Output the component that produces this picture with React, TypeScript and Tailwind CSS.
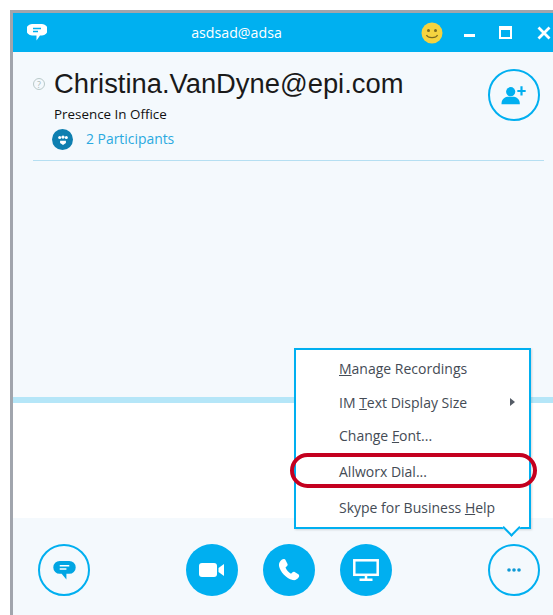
import React from 'react';

const menuFont = { fontFamily: '"Open Sans", "Noto Sans", sans-serif' };

const CircleButton: React.FC<{ filled?: boolean; children: React.ReactNode }> = ({ filled, children }) => (
  <div
    className={`flex h-[52px] w-[52px] shrink-0 items-center justify-center rounded-full ${
      filled ? 'bg-[#00aff0]' : 'border-[2px] border-[#00aff0] bg-[#f4f9fd]'
    }`}
  >
    {children}
  </div>
);

const MenuItem: React.FC<{ children: React.ReactNode; arrow?: boolean }> = ({ children, arrow }) => (
  <div className="flex h-[33.5px] items-center justify-between pl-[43px] pr-[14px] text-[14px] text-[#444b55]">
    <span>{children}</span>
    {arrow && <span className="h-0 w-0 border-y-[4px] border-l-[5px] border-y-transparent border-l-[#555c66]" />}
  </div>
);

export default function App() {
  return (
    <div className="h-[615px] w-[553px] overflow-hidden bg-white pl-[10px] pt-[10px]">
      <div className="relative flex h-[605px] w-[560px] flex-col border-l-[3px] border-t-[3px] border-[#a1a5ad]">
        {/* title bar */}
        <div className="flex h-[39px] shrink-0 items-center bg-[#00b0f0] text-white">
          <svg className="ml-[14px] h-[19px] w-[20px]" viewBox="0 0 20 19">
            <path d="M5 1h10a4.500 4.500 0 0 1 0 11.500h-2l-3.500 5v-5H5A4.500 4.500 0 0 1 5 1z" fill="#fff" />
            <path d="M6 5.500h8M6 8.500h5" stroke="#00b0f0" strokeWidth="1.500" />
          </svg>
          <span className="ml-[137px] w-[105px] text-center text-[14.200px]" style={menuFont}>asdsad@adsa</span>
          <div className="ml-[132px] flex h-[22px] w-[22px] items-center justify-center">
            <svg viewBox="0 0 22 22" className="h-[22px] w-[22px]">
              <circle cx="11" cy="11" r="10.500" fill="#f5d33f" />
              <circle cx="7.500" cy="8.500" r="1.500" fill="#7a6a20" />
              <circle cx="14.500" cy="8.500" r="1.500" fill="#7a6a20" />
              <path d="M5.500 13c1.500 3.500 9.500 3.500 11 0" fill="none" stroke="#7a6a20" strokeWidth="1.300" />
            </svg>
          </div>
          <div className="ml-[21px] mt-[6px] h-[3px] w-[11px] bg-white" />
          <div className="ml-[24px] h-[13px] w-[13px] border-[2px] border-t-[4px] border-white" />
          <svg className="ml-[25px] h-[14px] w-[14px]" viewBox="0 0 14 14">
            <path d="M1.500 1.500l11 11M12.500 1.500l-11 11" stroke="#fff" strokeWidth="2.800" />
          </svg>
        </div>

        {/* conversation header */}
        <div className="h-[345px] shrink-0 bg-[#f4f9fd] pl-[20px]">
          <div className="flex w-[511px] flex-col border-b border-[#b5dff2] pb-[10px]">
            <div className="flex items-start justify-between">
              <div className="flex items-center pt-[16px]">
                <span className="flex h-[12px] w-[12px] items-center justify-center rounded-full border border-[#b9c9c9] text-[9px] leading-none text-[#a9b9b9]" style={menuFont}>?</span>
                <span className="ml-[9px] text-[27.350px] leading-[32px] text-[#1a1a1a]" style={{ fontFamily: '"Liberation Sans", sans-serif' }}>
                  Christina.VanDyne@epi.com
                </span>
              </div>
              <div className="mr-[4px] mt-[17px]">
                <CircleButton>
                  <svg viewBox="0 0 30 24" className="h-[20px] w-[26px]" fill="#00aff0">
                    <circle cx="11" cy="8" r="5.500" />
                    <path d="M0 23c0-6 3-8 7-9h8c4 1 7 3 7 9z" />
                    <path d="M19 6h10v2.500H19zM22.700 1.500h2.600v11h-2.600z" />
                  </svg>
                </CircleButton>
              </div>
            </div>
            <div className="-mt-[16px] pl-[21px] text-[13.400px] leading-[18px] text-[#111111]" style={menuFont}>Presence In Office</div>
            <div className="mt-[6px] flex items-center pl-[19px]">
              <span className="flex h-[21px] w-[21px] items-center justify-center rounded-full bg-[#0e7fb0]">
                <svg viewBox="0 0 14 12" className="h-[10px] w-[12px]" fill="#fff">
                  <circle cx="3" cy="3" r="1.800" />
                  <circle cx="7" cy="2.500" r="2" />
                  <circle cx="11" cy="3" r="1.800" />
                  <path d="M3.500 7h7v2.500L7 12 3.500 9.500z" />
                </svg>
              </span>
              <span className="ml-[13px] text-[13.900px] text-[#2aa9e0]" style={menuFont}>2 Participants</span>
            </div>
          </div>
        </div>

        {/* compose area */}
        <div className="h-[6px] shrink-0 bg-[#b5e6f8]" />
        <div className="h-[115px] shrink-0 bg-white" />

        {/* call controls */}
        <div className="flex flex-1 items-start bg-[#f4f9fd] pl-[25px] pt-[26px]">
          <CircleButton>
            <svg viewBox="0 0 24 22" className="h-[21px] w-[23px]">
              <path d="M7 1h10a6 6 0 0 1 0 13.500h-3v6l-5-6H7A6 6 0 0 1 7 1z" fill="#00a5e3" />
              <path d="M7 6h10M7 9.500h7" stroke="#fff" strokeWidth="1.500" />
            </svg>
          </CircleButton>
          <div className="ml-[96px] flex gap-[25px]">
            <CircleButton filled>
              <svg viewBox="0 0 26 16" className="h-[16px] w-[26px]" fill="#fff">
                <rect x="0" y="1" width="18" height="14" rx="3" />
                <path d="M19.500 6l5.500-4v12l-5.500-4z" />
              </svg>
            </CircleButton>
            <CircleButton filled>
              <svg viewBox="0 0 24 24" className="h-[24px] w-[24px]" fill="#fff">
                <path d="M5 1.500c1.500-1 3-.5 3.500.5l2 4c.4.900 0 1.800-.7 2.300L8.500 9.500c.8 2.500 3 5 5.500 6.200l1.300-1.300c.7-.7 1.600-.9 2.400-.4l3.600 2.300c1 .6 1.200 2 .4 3-1.500 2.200-3.500 3.200-6 2.700C9 20.500 3 13.500 2 8c-.4-2.800 1-5 3-6.500z" />
              </svg>
            </CircleButton>
            <CircleButton filled>
              <svg viewBox="0 0 26 22" className="h-[22px] w-[26px]" fill="none" stroke="#fff" strokeWidth="2.500">
                <rect x="1.300" y="1.300" width="23.400" height="14.500" />
                <path d="M13 16v4M6.500 20.800h13" />
              </svg>
            </CircleButton>
          </div>
          <div className="ml-[96px]">
            <CircleButton>
              <svg viewBox="0 0 14 4" className="h-[4px] w-[14px]" fill="#0e9ad6">
                <circle cx="2" cy="2" r="1.800" />
                <circle cx="7" cy="2" r="1.800" />
                <circle cx="12" cy="2" r="1.800" />
              </svg>
            </CircleButton>
          </div>
        </div>

        {/* overflow menu, open over the compose area */}
        <div
          className="absolute left-[281px] top-[335px] flex h-[181px] w-[237px] flex-col border-[2px] border-[#00aff0] bg-white pt-[2px] shadow-[1px_1px_2px_rgba(0,0,0,0.15)]"
          style={menuFont}
        >
          <MenuItem><span className="underline">M</span>anage Recordings</MenuItem>
          <MenuItem arrow>IM <span className="underline">T</span>ext Display Size</MenuItem>
          <MenuItem>Change <span className="underline">F</span>ont...</MenuItem>
          <div className="h-[2px]" />
          <MenuItem>Allworx Dial...</MenuItem>
          <div className="h-[3px]" />
          <MenuItem>Skype for Business <span className="underline">H</span>elp</MenuItem>
          <span className="absolute left-[209px] top-[171px] h-[13px] w-[13px] rotate-45 border-b-[2px] border-r-[2px] border-[#00aff0] bg-white" />
          {/* highlight ring round the Allworx item */}
          <span className="absolute -left-[6px] top-[103px] h-[35px] w-[247px] rounded-full border-[4px] border-[#c4001f]" />
        </div>
      </div>
    </div>
  );
}
